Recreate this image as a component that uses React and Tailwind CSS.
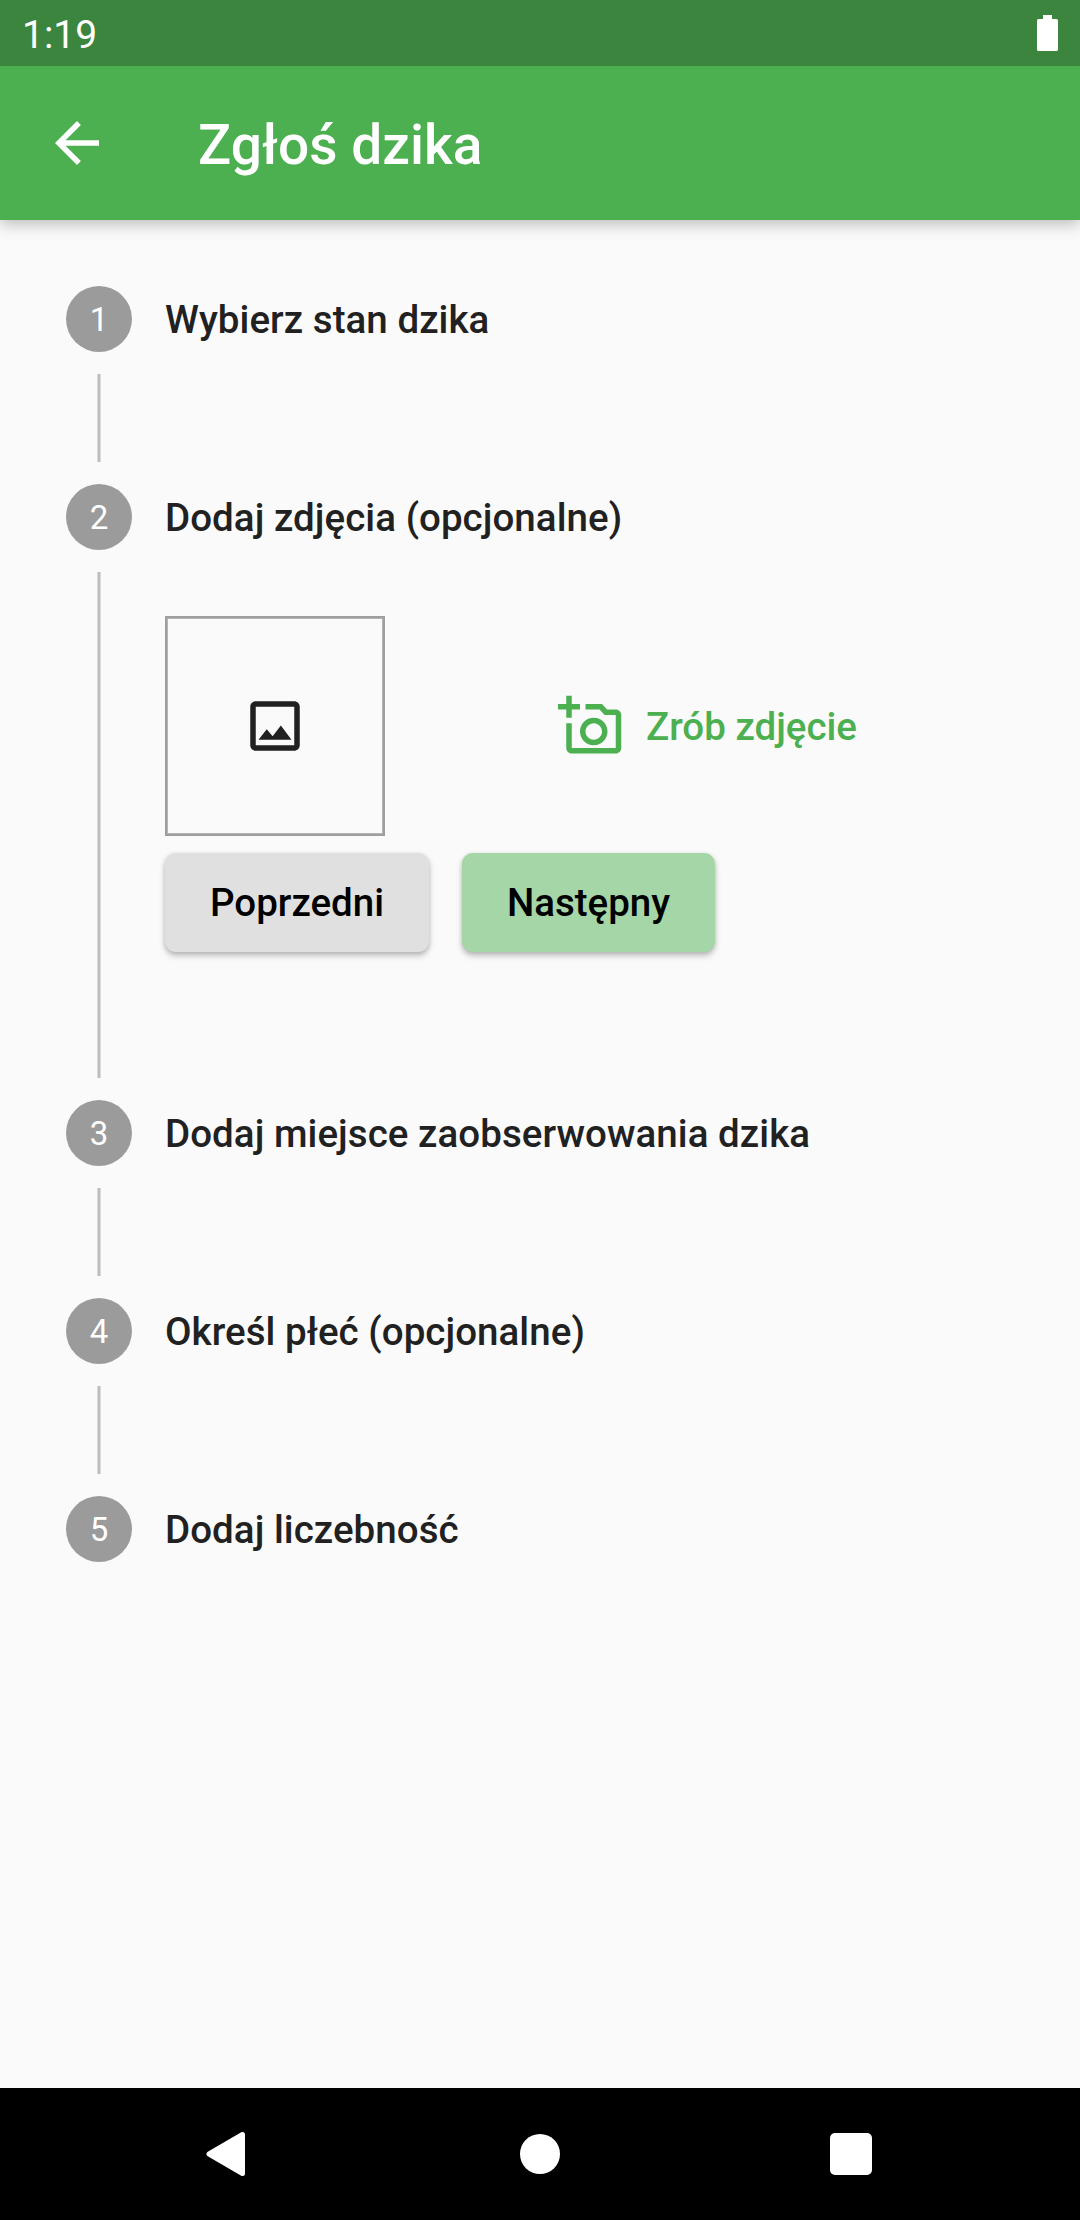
import React from "react";

const STEPS = [
  "Wybierz stan dzika",
  "Dodaj zdjęcia (opcjonalne)",
  "Dodaj miejsce zaobserwowania dzika",
  "Określ płeć (opcjonalne)",
  "Dodaj liczebność",
];

function StatusBar() {
  return (
    <div className="z-20 flex h-[66px] shrink-0 items-center justify-between bg-[#3b853e] px-[22px] text-white">
      <span className="pt-1 text-[39px] leading-none">1:19</span>
      <svg className="h-9 w-[21px]" viewBox="0 0 21 36" fill="currentColor">
        <path d="M6 0h9v4h4.500a1.500 1.500 0 0 1 1.500 1.500v29a1.500 1.500 0 0 1-1.500 1.500h-18a1.500 1.500 0 0 1-1.500-1.500v-29a1.500 1.500 0 0 1 1.500-1.500h4.500z" />
      </svg>
    </div>
  );
}

function AppBar() {
  return (
    <header className="z-10 flex h-[154px] shrink-0 items-center bg-[#4caf50] pl-11 text-white shadow-[0_5px_14px_rgba(0,0,0,0.23)]">
      <svg className="size-[66px]" viewBox="0 0 24 24" fill="currentColor">
        <path d="M20 11H7.830l5.590-5.590L12 4l-8 8 8 8 1.410-1.410L7.830 13H20v-2z" />
      </svg>
      <h1 className="pt-1 pl-[88px] text-[55px] leading-[64px] font-medium tracking-[0.05px]">Zgłoś dzika</h1>
    </header>
  );
}

function PhotoContent() {
  return (
    <div>
      <div className="flex">
        <div className="flex size-[220px] items-center justify-center border-2 border-[#9e9e9e] text-[#212121] shadow-[inset_0_0_0_1px_#b5b5b5]">
          <svg className="size-[66px]" viewBox="0 0 24 24" fill="currentColor">
            <path d="M19 5v14H5V5h14m0-2H5c-1.100 0-2 .9-2 2v14c0 1.100.9 2 2 2h14c1.100 0 2-.9 2-2V5c0-1.100-.9-2-2-2zm-4.860 8.860l-3 3.870L9 13.140 6 17h12l-3.860-5.140z" />
          </svg>
        </div>
        <button className="ml-[173px] flex items-center gap-[22px] text-[#4caf50]">
          <svg className="size-[66px]" viewBox="0 0 24 24" fill="currentColor">
            <path d="M21 6h-3.170L16 4h-6v2h5.120l1.830 2H21v12H5v-9H3v9c0 1.100.9 2 2 2h16c1.100 0 2-.9 2-2V8c0-1.100-.9-2-2-2zM8 14c0 2.760 2.240 5 5 5s5-2.240 5-5-2.240-5-5-5-5 2.240-5 5zm5-3c1.650 0 3 1.350 3 3s-1.350 3-3 3-3-1.350-3-3 1.350-3 3-3zM5 6h3V4H5V1H3v3H0v2h3v3h2z" />
          </svg>
          <span className="pt-0.5 text-[38.5px] font-medium">Zrób zdjęcie</span>
        </button>
      </div>
      <div className="mt-[16.5px] flex gap-[33px] text-[38.5px] font-medium text-black">
        <button className="h-[99px] w-[264px] rounded-[11px] bg-[#e0e0e0] pt-0.5 shadow-[0_4px_6px_rgba(0,0,0,0.22),0_1px_4px_rgba(0,0,0,0.12)]">
          Poprzedni
        </button>
        <button className="h-[99px] w-[253px] rounded-[11px] bg-[#a5d6a7] pt-0.5 shadow-[0_4px_6px_rgba(0,0,0,0.22),0_1px_4px_rgba(0,0,0,0.12)]">
          Następny
        </button>
      </div>
    </div>
  );
}

function Step({ number, title, last, children }) {
  return (
    <li className="flex gap-[33px]">
      <div className="flex w-[66px] flex-col items-center">
        <div className="flex size-[66px] shrink-0 items-center justify-center rounded-full bg-[#9b9b9b] text-[33px] leading-none text-white">
          {number}
        </div>
        {!last && (
          <div className="my-[22px] min-h-[88px] w-1 grow border-x border-[#dadada] bg-[#bdbdbd]" />
        )}
      </div>
      <div>
        <h2 className="h-[66px] text-[38.5px] leading-[68px] font-medium tracking-[0.05px] text-[#212121]">{title}</h2>
        {children && <div className="h-[550px] pt-[66px]">{children}</div>}
      </div>
    </li>
  );
}

function NavBar() {
  return (
    <nav className="flex h-[132px] shrink-0 items-center bg-black pl-[206px] text-white">
      <svg className="h-[46px] w-10" viewBox="0 0 40 46" fill="currentColor">
        <path
          d="M3 23 36.500 3.500V42.500Z"
          stroke="currentColor"
          strokeWidth="5"
          strokeLinejoin="round"
        />
      </svg>
      <div className="ml-[274px] size-10 rounded-full bg-white" />
      <div className="ml-[270px] size-[41.5px] rounded-[5px] bg-white" />
    </nav>
  );
}

export default function App() {
  return (
    <div className="flex h-[2220px] w-[1080px] flex-col overflow-hidden bg-[#fafafa] font-['Roboto',sans-serif]">
      <StatusBar />
      <AppBar />
      <main className="grow px-[66px] pt-[66px]">
        <ol>
          {STEPS.map((title, i) => (
            <Step key={title} number={i + 1} title={title} last={i === STEPS.length - 1}>
              {i === 1 && <PhotoContent />}
            </Step>
          ))}
        </ol>
      </main>
      <NavBar />
    </div>
  );
}
